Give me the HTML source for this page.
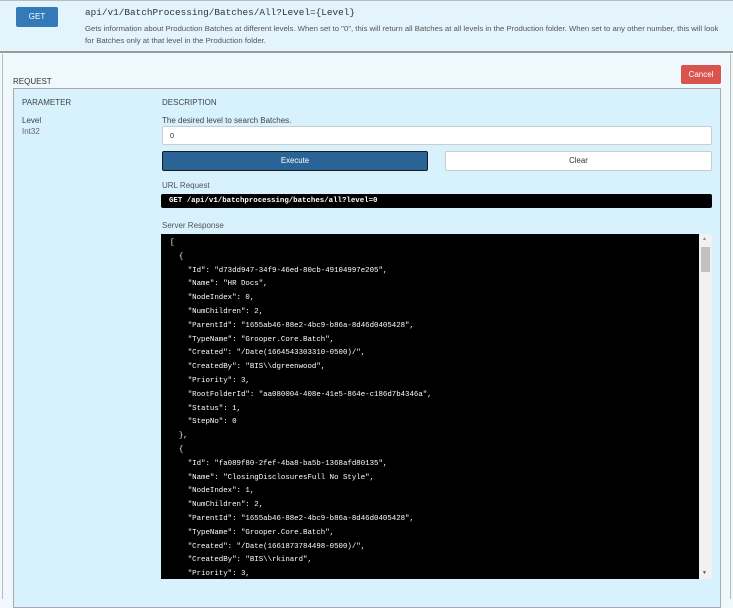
<!DOCTYPE html>
<html><head><style>
*{margin:0;padding:0;box-sizing:border-box}
body{width:733px;height:599px;overflow:hidden;background:#eef8fd;font-family:"Liberation Sans",sans-serif;color:#333;position:relative}
.a{position:absolute}
.hdr{left:0;top:0;width:733px;height:53px;background:#e3f4fc;border-bottom:2px solid #9a9a9a;border-top:1px solid #bbb}
.get{left:16px;top:7px;width:42px;height:20px;background:#337ab7;border-radius:2px;color:#fff;font-size:8px;text-align:center;line-height:20px}
.ttl{left:85px;top:7px;font-family:"Liberation Mono",monospace;font-size:9.4px;color:#333}
.dsc{left:85px;top:23px;font-size:7.75px;line-height:12px;color:#555;width:640px}
.body{left:2px;top:54px;width:729px;height:545px;border-left:1px solid #bbb;border-right:1px solid #bbb}
.cancel{left:681px;top:65px;width:40px;height:19px;background:#d9534f;border-radius:2px;color:#fff;font-size:8px;text-align:center;line-height:19px}
.req{left:13px;top:77px;font-size:8px;color:#333}
.panel{left:13px;top:88px;width:708px;height:520px;background:#d7f1fd;border:1px solid #aaa}
.lbl{font-size:8px;color:#444}
.inp{left:162px;top:126px;width:550px;height:19px;background:#fff;border:1px solid #ccc;border-radius:2px;font-size:7.5px;padding-left:7px;line-height:17px}
.exe{left:162px;top:151px;width:266px;height:20px;background:#2a6496;border:1px solid #1a1a1a;border-radius:2px;color:#fff;font-size:7.8px;text-align:center;line-height:18px}
.clr{left:445px;top:151px;width:267px;height:20px;background:#fff;border:1px solid #ccc;border-radius:2px;font-size:7.8px;text-align:center;line-height:18px}
.url{left:161px;top:194px;width:551px;height:14px;background:#000;border-radius:2px;color:#fff;font-family:"Liberation Mono",monospace;font-size:7.4px;line-height:14px;padding-left:8px;font-weight:bold}
.resp{left:161px;top:234px;width:551px;height:345px;background:#000;overflow:hidden}
.resp pre{position:absolute;left:9px;top:3px;color:#fff;font-family:"Liberation Mono",monospace;font-size:7.4px;line-height:13.8px}
.sb{left:699px;top:234px;width:13px;height:345px;background:#f1f1f1}
.th{left:701px;top:247px;width:9px;height:25px;background:#c1c1c1}
</style></head><body>
<div class="a hdr"></div>
<div class="a get">GET</div>
<div class="a ttl">api/v1/BatchProcessing/Batches/All?Level={Level}</div>
<div class="a dsc">Gets information about Production Batches at different levels. When set to "0", this will return all Batches at all levels in the Production folder. When set to any other number, this will look for Batches only at that level in the Production folder.</div>
<div class="a body"></div>
<div class="a cancel">Cancel</div>
<div class="a req">REQUEST</div>
<div class="a panel"></div>
<div class="a lbl" style="left:22px;top:98px">PARAMETER</div>
<div class="a lbl" style="left:162px;top:98px">DESCRIPTION</div>
<div class="a lbl" style="left:22px;top:116px">Level</div>
<div class="a lbl" style="left:22px;top:127px;color:#666">Int32</div>
<div class="a lbl" style="left:162px;top:116px">The desired level to search Batches.</div>
<div class="a inp">0</div>
<div class="a exe">Execute</div>
<div class="a clr">Clear</div>
<div class="a lbl" style="left:162px;top:181px;color:#555">URL Request</div>
<div class="a url">GET /api/v1/batchprocessing/batches/all?level=0</div>
<div class="a lbl" style="left:162px;top:221px;color:#555">Server Response</div>
<div class="a resp"><pre>[
  {
    "Id": "d73dd947-34f9-46ed-80cb-49104997e205",
    "Name": "HR Docs",
    "NodeIndex": 0,
    "NumChildren": 2,
    "ParentId": "1655ab46-88e2-4bc9-b86a-8d46d0405428",
    "TypeName": "Grooper.Core.Batch",
    "Created": "/Date(1664543303310-0500)/",
    "CreatedBy": "BIS\\dgreenwood",
    "Priority": 3,
    "RootFolderId": "aa080004-408e-41e5-864e-c186d7b4346a",
    "Status": 1,
    "StepNo": 0
  },
  {
    "Id": "fa089f80-2fef-4ba8-ba5b-1368afd80135",
    "Name": "ClosingDisclosuresFull No Style",
    "NodeIndex": 1,
    "NumChildren": 2,
    "ParentId": "1655ab46-88e2-4bc9-b86a-8d46d0405428",
    "TypeName": "Grooper.Core.Batch",
    "Created": "/Date(1661873784498-0500)/",
    "CreatedBy": "BIS\\rkinard",
    "Priority": 3,</pre></div>
<div class="a sb"></div>
<div class="a th"></div>
<div class="a" style="left:702px;top:236px;font-size:5px;color:#888">▲</div>
<div class="a" style="left:702px;top:570px;font-size:5px;color:#555">▼</div>
</body></html>
